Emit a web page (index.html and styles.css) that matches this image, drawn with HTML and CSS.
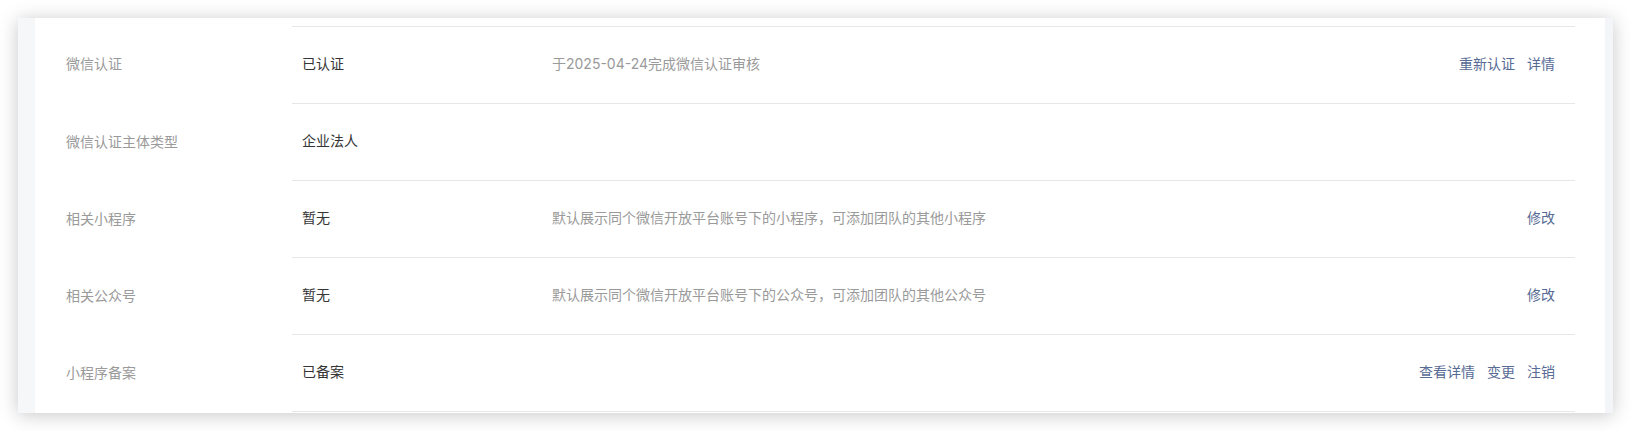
FILE: index.html
```html
<!DOCTYPE html>
<html lang="zh-CN">
<head>
  <meta charset="UTF-8">
  <meta name="viewport" content="width=device-width, initial-scale=1.0">
  <title>基本设置</title>
  <link rel="stylesheet" href="styles.css">
</head>
<body>

  <div class="card">
    <div class="side"></div>

    <div class="main">
      <div class="row">
        <div class="label">微信认证</div>
        <div class="body">
          <div class="value">已认证</div>
          <div class="desc">于2025-04-24完成微信认证审核</div>
          <div class="actions">
            <a href="#">重新认证</a>
            <a href="#">详情</a>
          </div>
        </div>
      </div>

      <div class="row">
        <div class="label">微信认证主体类型</div>
        <div class="body">
          <div class="value">企业法人</div>
          <div class="desc"></div>
          <div class="actions"></div>
        </div>
      </div>

      <div class="row">
        <div class="label">相关小程序</div>
        <div class="body">
          <div class="value">暂无</div>
          <div class="desc">默认展示同个微信开放平台账号下的小程序，可添加团队的其他小程序</div>
          <div class="actions">
            <a href="#">修改</a>
          </div>
        </div>
      </div>

      <div class="row">
        <div class="label">相关公众号</div>
        <div class="body">
          <div class="value">暂无</div>
          <div class="desc">默认展示同个微信开放平台账号下的公众号，可添加团队的其他公众号</div>
          <div class="actions">
            <a href="#">修改</a>
          </div>
        </div>
      </div>

      <div class="row">
        <div class="label">小程序备案</div>
        <div class="body">
          <div class="value">已备案</div>
          <div class="desc"></div>
          <div class="actions">
            <a href="#">查看详情</a>
            <a href="#">变更</a>
            <a href="#">注销</a>
          </div>
        </div>
      </div>
    </div>

    <div class="scroll"></div>
  </div>

</body>
</html>
```

FILE: styles.css
```css
body {
  margin: 0;
  padding: 18px;
  background: #fff;
  font-family: Inter, "Noto Sans CJK SC", sans-serif;
  font-size: 14px;
  line-height: 20px;
  color: #353535;
}

.card {
  display: flex;
  width: 1595px;
  height: 395px;
  overflow: hidden;
  background: #fff;
  box-shadow: 0 2px 18px rgba(0, 0, 0, 0.22);
}

.side {
  width: 17px;
  flex-shrink: 0;
  background: #f6f7f9;
}

.scroll {
  width: 8px;
  flex-shrink: 0;
  background: #f4f5f8;
}

.main {
  flex: 1;
  padding: 8px 30px 0 31px;
}

.row {
  display: flex;
}

.label {
  width: 226px;
  flex-shrink: 0;
  display: flex;
  align-items: center;
  padding-bottom: 2px;
  color: #9a9a9a;
}

.body {
  flex: 1;
  display: flex;
  align-items: center;
  height: 74px;
  padding-bottom: 2px;
  border-bottom: 1px solid #e7e7e7;
}

.row:first-child .body {
  border-top: 1px solid #e7e7e7;
}

.value {
  width: 250px;
  padding-left: 10px;
  flex-shrink: 0;
}

.desc {
  flex: 1;
  color: #9a9a9a;
}

.actions {
  display: flex;
  gap: 12px;
  padding-right: 20px;
}

.actions a {
  color: #576b95;
  text-decoration: none;
}
```
